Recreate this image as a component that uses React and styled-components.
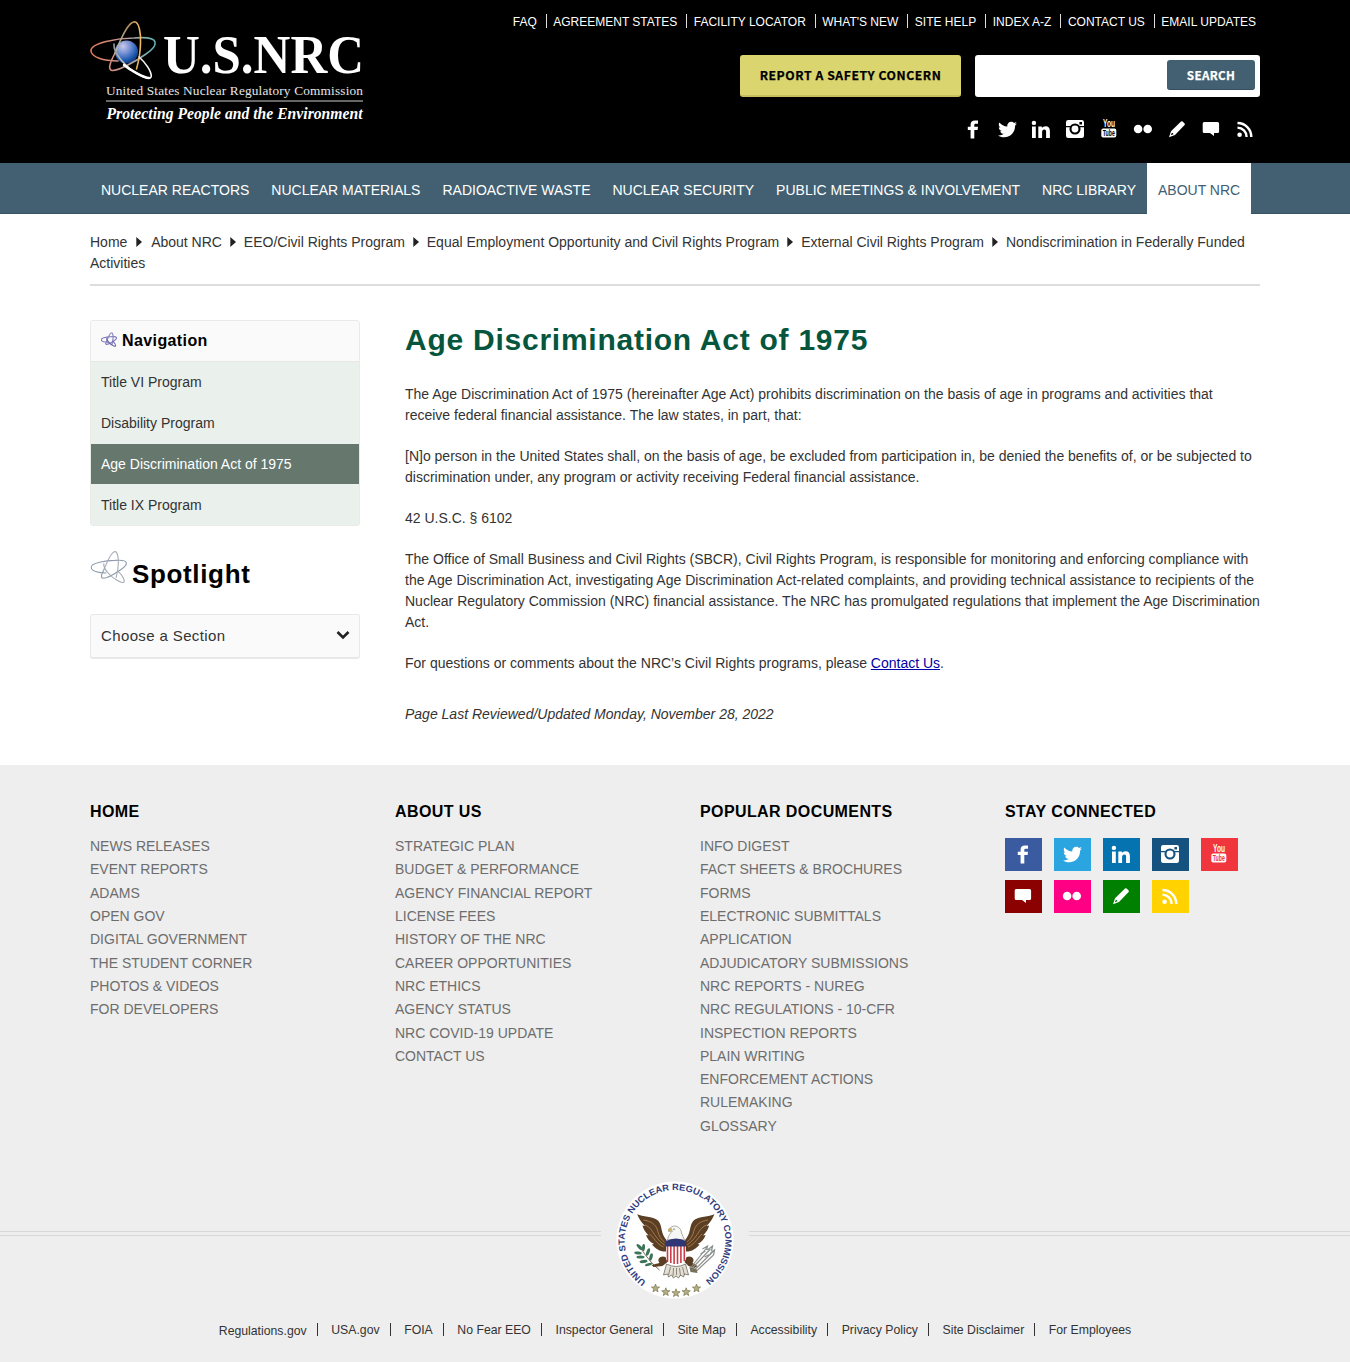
import React from "react";
import styled, { createGlobalStyle } from "styled-components";
import { FaTwitter } from "react-icons/fa";

const Global = createGlobalStyle`
  *, *::before, *::after { box-sizing: border-box; }
  body { margin: 0; background: #fff; color: #333; font: 14px/21px "Liberation Sans", Arial, sans-serif; }
  ul { list-style: none; margin: 0; padding: 0; }
  a { color: inherit; text-decoration: none; }
`;

const Container = styled.div`
  width: 1170px;
  margin: 0 auto;
`;

/* ---------- header ---------- */
const Header = styled.header`
  height: 163px;
  background: #000;
`;
const HeaderRow = styled(Container)`
  display: flex;
  justify-content: space-between;
`;
const LogoLink = styled.a`
  display: block;
  padding-top: 19px;
  svg { display: block; overflow: visible; }
`;
const HeaderSide = styled.div`
  display: flex;
  flex-direction: column;
  align-items: flex-end;
`;
const TopLinks = styled.ul`
  display: flex;
  align-items: center;
  height: 26px;
  margin: 9px 4px 0 0;
  color: #fff;
  font-size: 12px;
`;
const TopLink = styled.li`
  display: flex;
  align-items: center;
  & + &::before {
    content: "";
    width: 1px;
    height: 14px;
    margin: -3px 6.5px 0 9px;
    background: #ddd;
  }
`;
const Tools = styled.div`
  display: flex;
  gap: 14px;
  margin-top: 20px;
`;
const Report = styled.a`
  width: 221px;
  height: 42px;
  border-radius: 3px;
  border-bottom: 2px solid #c5c05d;
  background: #dad56f;
  color: #000;
  font: 700 12.2px/41px "Noto Sans CJK JP", sans-serif;
  letter-spacing: 0.57px;
  -webkit-text-stroke: 0.25px currentColor;
  text-align: center;
  white-space: nowrap;
`;
const Search = styled.form`
  display: flex;
  width: 285px;
  height: 42px;
  padding: 5px;
  border-radius: 3px;
  background: #fff;
`;
const SearchInput = styled.input`
  flex: 1;
  min-width: 0;
  border: 0;
  outline: 0;
  background: transparent;
`;
const SearchButton = styled.button`
  width: 88px;
  height: 30px;
  padding: 0;
  border: 0;
  border-bottom: 1px solid #365062;
  border-radius: 3px;
  background: #426072;
  color: #fff;
  font: 700 11.7px/27px "Noto Sans CJK JP", sans-serif;
  letter-spacing: 0.3px;
  -webkit-text-stroke: 0.25px currentColor;
`;
const HeaderSocial = styled.div`
  display: flex;
  margin: 20px -2px 0 0;
  color: #fff;
`;
const SocialCell = styled.a`
  display: flex;
  width: 34px;
  height: 24px;
  align-items: center;
  justify-content: center;
  svg { overflow: visible; }
`;

/* ---------- main nav ---------- */
const NavBar = styled.nav`
  height: 51px;
  background: #426072;
  border-bottom: 1px solid #385364;
`;
const NavList = styled(Container)`
  display: flex;
`;
const NavItem = styled.a`
  height: 51px;
  padding: 0 11px;
  line-height: 54px;
  white-space: nowrap;
  color: ${(p) => (p.$active ? "#426072" : "#fff")};
  background: ${(p) => (p.$active ? "#fff" : "transparent")};
`;

/* ---------- breadcrumb ---------- */
const Breadcrumb = styled(Container)`
  height: 72px;
  padding-top: 18px;
  border-bottom: 2px solid #ddd;
`;
const Arrow = styled.svg`
  width: 6px;
  height: 10px;
  margin: 0 ${(p) => (p.$wide ? 9.2 : 7.9)}px 0 ${(p) => (p.$wide ? 8.6 : 8)}px;
  vertical-align: 0;
  fill: #222;
`;

/* ---------- content ---------- */
const Main = styled(Container)`
  display: flex;
  gap: 45px;
  height: 479px;
  padding-top: 34px;
`;
const Sidebar = styled.aside`
  width: 270px;
  flex: none;
`;
const SideNav = styled.div`
  height: 206px;
  border: 1px solid #e9ebe9;
  border-radius: 3px;
  background: #eaf0eb;
  overflow: hidden;
`;
const SideTitle = styled.h2`
  display: flex;
  align-items: center;
  height: 41px;
  margin: 0;
  padding: 0 10px 1px;
  gap: 5px;
  border-bottom: 1px solid #e7e7e7;
  background: #fafafa;
  color: #000;
  font-size: 16px;
  letter-spacing: 0.4px;
  svg { margin-top: -3px; }
`;
const SideItem = styled.a`
  display: block;
  height: 40px;
  margin-bottom: 1px;
  padding-left: 10px;
  line-height: 40px;
  color: ${(p) => (p.$active ? "#fff" : "#333")};
  background: ${(p) => (p.$active ? "#66786e" : "#eaf0eb")};
`;
const SpotlightTitle = styled.h2`
  display: flex;
  align-items: flex-end;
  gap: 4px;
  height: 40px;
  margin: 24px 0 0;
  color: #000;
  font-size: 26px;
  line-height: 31px;
  letter-spacing: 0.65px;
  svg { align-self: flex-start; }
`;
const SectionSelect = styled.div`
  display: flex;
  align-items: center;
  justify-content: space-between;
  height: 45px;
  margin-top: 24px;
  padding: 0 9px 2px 10px;
  border: 1px solid #e8e8e8;
  border-bottom-width: 2px;
  border-radius: 3px;
  background: #fafafa;
  font-size: 15px;
  letter-spacing: 0.375px;
`;
const Article = styled.article`
  width: 855px;
`;
const Title = styled.h1`
  margin: 0 0 25px;
  color: #05563c;
  font-size: 30px;
  line-height: 39px;
  letter-spacing: 0.75px;
`;
const Para = styled.p`
  margin: 0 0 20px;
`;
const ContactLink = styled.a`
  color: #0000a8;
  text-decoration: underline;
`;
const Updated = styled.p`
  margin: 30px 0 0;
  font-style: italic;
`;

/* ---------- footer ---------- */
const Footer = styled.footer`
  height: 597px;
  background: #eee;
`;
const FooterCols = styled(Container)`
  display: flex;
  height: 414px;
  padding-top: 36px;
`;
const FooterCol = styled.section`
  width: 305px;
  flex: none;
  &:last-child { width: 255px; }
`;
const FooterHeading = styled.h3`
  margin: 0 0 13px;
  color: #000;
  font-size: 16px;
  line-height: 21px;
  letter-spacing: 0.4px;
`;
const FooterLink = styled.li`
  color: #6d6d6d;
  line-height: 23.31px;
`;
const Tiles = styled.div`
  display: flex;
  flex-wrap: wrap;
  gap: 9px 12px;
  margin-top: 16px;
  color: #fff;
`;
const Tile = styled.a`
  display: flex;
  width: 37px;
  height: 33px;
  padding: 0 1px 1px 0;
  align-items: center;
  justify-content: center;
  background: ${(p) => p.$bg};
  svg { overflow: visible; }
`;
const SealRow = styled.div`
  display: flex;
  align-items: center;
  height: 122px;
`;
const Rule = styled.div`
  flex: 1;
  height: 5px;
  margin-top: -13px;
  border: solid #d8d8d8;
  border-width: 1px 0;
`;
const SealBox = styled.div`
  width: 148px;
  text-align: center;
  svg { display: block; margin: 0 auto; overflow: visible; }
`;
const BottomLinks = styled.ul`
  display: flex;
  justify-content: center;
  margin-top: 19px;
  font-size: 12.25px;
`;
const BottomLink = styled.li`
  display: flex;
  align-items: center;
  height: 21px;
  & + &::before {
    content: "";
    width: 1px;
    height: 13px;
    margin: -3px 13.5px 0 10.1px;
    background: #333;
  }
`;
const Lowered = styled.span`
  padding-top: 2px;
`;

/* ---------- drawings ---------- */
const Orbits = ({ width, height, colors, stroke = 1.5, globe }) => (
  <svg width={width} height={height} viewBox="0 -1 67 62" fill="none" strokeWidth={stroke} strokeLinecap="round">
    {globe && (
      <defs>
        <radialGradient id="globe" cx=".35" cy=".25" r=".8">
          <stop offset="0" stopColor="#c9c9ea" />
          <stop offset=".4" stopColor="#7590d2" />
          <stop offset=".75" stopColor="#1f5cb4" />
          <stop offset="1" stopColor="#0c2f70" />
        </radialGradient>
        <linearGradient id="orbA"><stop offset="0" stopColor="#e5785a" /><stop offset=".5" stopColor="#c79a95" /><stop offset="1" stopColor="#5fb4b8" /></linearGradient>
        <linearGradient id="orbB"><stop offset="0" stopColor="#a9bfb4" /><stop offset=".5" stopColor="#b08a58" /><stop offset="1" stopColor="#f2b968" /></linearGradient>
        <linearGradient id="orbC"><stop offset="0" stopColor="#999" /><stop offset=".4" stopColor="#ddd" /><stop offset="1" stopColor="#fff" /></linearGradient>
      </defs>
    )}
    {globe && <circle cx="36.5" cy="32" r="11.5" fill="url(#globe)" />}
    <path d="M28 41C13 41 1.5 37 1 31C0 23 28 18 44 18C56 17 64 18 65 22C66 26 62 30 56 34C46 41 29 51 22 50.5C17 49 21 41 25 33" stroke={colors[0]} />
    <path d="M25 33C29 24 37 2 44.5 1.8C49 2 51 13 50.5 23C50.4 32 48.5 42 46.5 49" stroke={colors[1]} />
    <path d="M24 24C23 34 37 48 48 54C56 58.5 61 60 61.3 56C61 51 56 43 49 37" stroke={colors[2]} />
    {globe && <path d="M34 45C40 50 54 58 59 58" stroke="#fff" strokeWidth="2.4" />}
  </svg>
);

const logoSerif = "'Liberation Serif', 'Times New Roman', serif";
const Logo = () => (
  <svg width="275" height="106" viewBox="0 0 275 106" fill="#fff" fontFamily={logoSerif}>
    <Orbits width={67} height={62} stroke={1.6} globe colors={["url(#orbA)", "url(#orbB)", "url(#orbC)"]} />
    <text x="73" y="54" fontSize="55" fontWeight="700" textLength="201" lengthAdjust="spacingAndGlyphs">U.S.NRC</text>
    <text x="16" y="75.5" fontSize="13.3" fill="#e6e6e6" textLength="257" lengthAdjust="spacing">United States Nuclear Regulatory Commission</text>
    <rect x="16" y="81.5" width="257" height="1" fill="#ccc" />
    <text x="16.5" y="99.5" fontSize="17" fontWeight="700" fontStyle="italic" textLength="256" lengthAdjust="spacingAndGlyphs">Protecting People and the Environment</text>
  </svg>
);

const Facebook = () => (
  <svg width="12" height="19" viewBox="0 0 12 19" fill="currentColor">
    <path d="M3.6 18.5V9.9H.8V6.7H3.6V4.6C3.6 1.8 5.2.5 7.9.5H11V3.8H8.9C7.7 3.8 7.3 4.3 7.3 5.2V6.7H11L10.6 9.9H7.3V18.5Z" />
  </svg>
);
const Twitter = () => <FaTwitter size={19} />;
const LinkedIn = () => (
  <svg width="19" height="19" viewBox=".7 0 19 19" fill="currentColor">
    <circle cx="2.6" cy="2.9" r="2.2" />
    <path d="M.7 6.5H4.5V18H.7ZM7 6.5H10.6V8.1C11.4 6.9 12.6 6.2 14.3 6.2C17.2 6.2 18.6 8 18.6 11.2V18H14.8V11.8C14.8 10.2 14.2 9.4 13 9.4C11.6 9.4 10.8 10.4 10.8 12V18H7Z" />
  </svg>
);
const Instagram = ({ hole }) => (
  <svg width="18" height="18" viewBox="0 0 18 18" fill="currentColor">
    <path fillRule="evenodd" d="M2.2 0H15.8A2.2 2.2 0 0 1 18 2.2V15.8A2.2 2.2 0 0 1 15.8 18H2.2A2.2 2.2 0 0 1 0 15.8V2.2A2.2 2.2 0 0 1 2.2 0ZM13.4 2V4.6H16V2Z" />
    <path d="M0 6.7H4.5M13.5 6.7H18" stroke={hole} strokeWidth="1.3" />
    <circle cx="9" cy="9" r="4.5" fill="currentColor" stroke={hole} strokeWidth="2.1" />
  </svg>
);
const YouTube = ({ hole }) => (
  <svg width="18" height="20" viewBox="0 0 18 20" fill="currentColor" opacity=".99" fontFamily="'Liberation Sans', Arial, sans-serif" fontWeight="700">
    <text x="3" y="8.3" fontSize="10.8" textLength="12" lengthAdjust="spacingAndGlyphs">You</text>
    <rect x="1.3" y="9.6" width="15" height="9" rx="1.8" />
    <text x="2.8" y="17.2" fontSize="8.4" fill={hole} textLength="12" lengthAdjust="spacingAndGlyphs">Tube</text>
  </svg>
);
const Flickr = () => (
  <svg width="20" height="18" viewBox="0 0 20 18" fill="currentColor">
    <circle cx="5.1" cy="9" r="4.3" /><circle cx="14.7" cy="9" r="4.3" />
  </svg>
);
const Pencil = () => (
  <svg width="18" height="18" viewBox="0 0 18 18" fill="currentColor">
    <path fillRule="evenodd" d="M13 1.5Q13.8.8 14.6 1.5L16.6 3.5Q17.3 4.3 16.6 5.1L7 15L1 17.2L3 11.3ZM3.9 12.8L2.8 15.3L5.4 14.3Q5.4 13 3.9 12.8Z" />
  </svg>
);
const Bubble = () => (
  <svg width="18" height="18" viewBox="0 0 18 18" fill="currentColor">
    <path d="M2.2 2H15.6Q17.1 2 17.1 3.5V11.6Q17.1 13.1 15.6 13.1H12V16L8 13.1H2.2Q.7 13.1 .7 11.6V3.5Q.7 2 2.2 2Z" />
  </svg>
);
const Rss = () => (
  <svg width="18" height="18" viewBox="0 0 18 18" fill="none" stroke="currentColor" strokeWidth="2.4">
    <circle cx="3.6" cy="14.7" r="2.3" fill="currentColor" stroke="none" />
    <path d="M1.5 7.6A9.3 9.3 0 0 1 10.6 16.9M1.5 3A13.8 13.8 0 0 1 15.3 16.9" />
  </svg>
);

const Star = ({ x, y }) => (
  <path transform={`translate(${x} ${y}) scale(1.05)`} d="M0-4L1-1.2L3.9-1.2L1.6.6L2.4 3.4L0 1.8L-2.4 3.4L-1.6.6L-3.9-1.2L-1-1.2Z" fill="#b5b184" stroke="#7b7850" strokeWidth=".7" />
);
const Wing = () => (
  <g>
    <path d="M22.7 34.3C28 37 38 36 43.5 40.5C48 45 46 54 52 60V71.5C46 72 41 69 37.5 64.5L39.5 64C35 62 32.5 58 31.5 55L34 55.5C30.5 52 28.5 48 28 45.5L30.5 46C26.5 42 24 38 22.7 34.3Z" fill="#5b3f25" />
    <path d="M29 40C36 41 41 44 43 50C44 54 45 58 50 62M30.5 45C36 47 38 52 41 56C44 60 47 63 50 65M35 54C39 57 42 64 49 67" stroke="#a67a48" strokeWidth="1" fill="none" />
  </g>
);
const Seal = () => (
  <svg width="120" height="120" viewBox=".5 0 120 120">
    <circle cx="60.5" cy="60" r="58.5" fill="#fff" />
    <path id="sealArc" d="M31.5 101.5A50.3 50.3 0 1 1 89.5 101.5" fill="none" />
    <text fontFamily="'Liberation Sans', Arial, sans-serif" fontWeight="700" fontSize="9" fill="#2f3d80">
      <textPath href="#sealArc" textLength="252" lengthAdjust="spacingAndGlyphs">UNITED STATES NUCLEAR REGULATORY COMMISSION</textPath>
    </text>
    <Wing />
    <g transform="matrix(-1 0 0 1 122.6 0)"><Wing /></g>
    <path d="M51 77C46 75 42 79 45 83L37 85L39 87L48 86L53 82ZM72 77C77 75 81 79 78 83L83 86L80 88L74 86L70 82Z" fill="#5b3f25" />
    <path d="M52 84Q62 89 71 84L74 95L70 94L69 97L66 95L64 98L61.5 96L59 98L57 95L54 97L53 94L49 95Z" fill="#e4e0d6" stroke="#5d594c" strokeWidth=".7" />
    <path d="M56 87L54 95M59 88L58.5 96M62 88V95M65 88L66 96M68 87L70 95" stroke="#666255" strokeWidth=".7" />
    <path d="M53 60C54 55 56 53 58 51L54 51.5Q53 48.5 57 47C61 44 67 48 67 53L70 60Z" fill="#f6f6f4" stroke="#8b887d" strokeWidth=".7" />
    <path d="M54 51.5Q53 48.5 57 48L58 50.5Z" fill="#ceb257" />
    <circle cx="59.5" cy="49.2" r=".6" fill="#333" />
    <path d="M51.5 63H71.5V78Q71 83 61.5 85Q52 83 51.5 78Z" fill="#fff" />
    <path d="M53 64V82M56.3 64V83M59.6 64V84M63 64V84M66.4 64V83M69.8 64V81" stroke="#c93c49" strokeWidth="1.6" />
    <path d="M51.5 61Q56 58.5 61.5 58.5Q67 58.5 71.5 61V66.5H51.5Z" fill="#303675" />
    <path d="M45 90Q36 83 26 68" stroke="#554b32" strokeWidth=".8" fill="none" />
    <g fill="#3c7459">
      <ellipse cx="25" cy="67" rx="3.8" ry="1.6" transform="rotate(45 25 67)" />
      <ellipse cx="29" cy="67.5" rx="3.5" ry="1.5" transform="rotate(95 29 67.5)" />
      <ellipse cx="23.5" cy="73" rx="3.8" ry="1.5" transform="rotate(8 23.5 73)" />
      <ellipse cx="33.5" cy="72" rx="4" ry="1.6" transform="rotate(110 33.5 72)" />
      <ellipse cx="26" cy="77" rx="4" ry="1.5" />
      <ellipse cx="36.5" cy="77" rx="3.8" ry="1.6" transform="rotate(105 36.5 77)" />
      <ellipse cx="29" cy="81.5" rx="4" ry="1.5" transform="rotate(-8 29 81.5)" />
      <ellipse cx="34" cy="84.5" rx="3.6" ry="1.4" transform="rotate(-15 34 84.5)" />
    </g>
    <path d="M76 90L96 69M79 91L98 72M81 92L99 75M76 88L92 68" stroke="#8b8e8a" strokeWidth="1.1" />
    <path d="M75 87L82 89L83 93L76 92Z" fill="#77705c" />
    <path d="M88 69L93 66L92 70M93 70L98 66L97 71M96 73L100 70L99 75M86 74L91 71M90 77L96 74" stroke="#87928f" strokeWidth="1.3" fill="none" />
    <Star x={41} y={108.3} /><Star x={51.3} y={112} /><Star x={61.5} y={113} /><Star x={71.7} y={112} /><Star x={82} y={108.3} />
  </svg>
);

/* ---------- data ---------- */
const topLinks = ["FAQ", "AGREEMENT STATES", "FACILITY LOCATOR", "WHAT'S NEW", "SITE HELP", "INDEX A-Z", "CONTACT US", "EMAIL UPDATES"];
const navItems = ["NUCLEAR REACTORS", "NUCLEAR MATERIALS", "RADIOACTIVE WASTE", "NUCLEAR SECURITY", "PUBLIC MEETINGS & INVOLVEMENT", "NRC LIBRARY", "ABOUT NRC"];
const crumbs = ["Home", "About NRC", "EEO/Civil Rights Program", "Equal Employment Opportunity and Civil Rights Program", "External Civil Rights Program", "Nondiscrimination in Federally Funded Activities"];
const sideItems = ["Title VI Program", "Disability Program", "Age Discrimination Act of 1975", "Title IX Program"];
const headerIcons = [Facebook, Twitter, LinkedIn, Instagram, YouTube, Flickr, Pencil, Bubble, Rss];
const columns = [
  ["HOME", ["NEWS RELEASES", "EVENT REPORTS", "ADAMS", "OPEN GOV", "DIGITAL GOVERNMENT", "THE STUDENT CORNER", "PHOTOS & VIDEOS", "FOR DEVELOPERS"]],
  ["ABOUT US", ["STRATEGIC PLAN", "BUDGET & PERFORMANCE", "AGENCY FINANCIAL REPORT", "LICENSE FEES", "HISTORY OF THE NRC", "CAREER OPPORTUNITIES", "NRC ETHICS", "AGENCY STATUS", "NRC COVID-19 UPDATE", "CONTACT US"]],
  ["POPULAR DOCUMENTS", ["INFO DIGEST", "FACT SHEETS & BROCHURES", "FORMS", "ELECTRONIC SUBMITTALS", "APPLICATION", "ADJUDICATORY SUBMISSIONS", "NRC REPORTS - NUREG", "NRC REGULATIONS - 10-CFR", "INSPECTION REPORTS", "PLAIN WRITING", "ENFORCEMENT ACTIONS", "RULEMAKING", "GLOSSARY"]],
];
const tiles = [
  [Facebook, "#3b5ba0"], [Twitter, "#2ba5df"], [LinkedIn, "#0673b1"], [Instagram, "#16527f"], [YouTube, "#f0353d"],
  [Bubble, "#8b0000"], [Flickr, "#ff0084"], [Pencil, "#008000"], [Rss, "#ffd200"],
];
const bottomLinks = ["Regulations.gov", "USA.gov", "FOIA", "No Fear EEO", "Inspector General", "Site Map", "Accessibility", "Privacy Policy", "Site Disclaimer", "For Employees"];

export default function App() {
  return (
    <>
      <Global />
      <Header>
        <HeaderRow>
          <LogoLink><Logo /></LogoLink>
          <HeaderSide>
            <TopLinks>{topLinks.map((t) => <TopLink key={t}><a>{t}</a></TopLink>)}</TopLinks>
            <Tools>
              <Report>REPORT A SAFETY CONCERN</Report>
              <Search>
                <SearchInput aria-label="Search" />
                <SearchButton type="button">SEARCH</SearchButton>
              </Search>
            </Tools>
            <HeaderSocial>
              {headerIcons.map((Icon, i) => <SocialCell key={i}><Icon hole="#000" /></SocialCell>)}
            </HeaderSocial>
          </HeaderSide>
        </HeaderRow>
      </Header>
      <NavBar>
        <NavList>
          {navItems.map((t) => <NavItem key={t} $active={t === "ABOUT NRC"}>{t}</NavItem>)}
        </NavList>
      </NavBar>
      <Breadcrumb>
        {crumbs.map((t, i) => (
          <React.Fragment key={t}>
            {i > 0 && <Arrow $wide={i === 1} viewBox="0 0 6 10"><path d="M0.3 0L6 5L0.3 10Z" /></Arrow>}
            <a>{t}</a>
          </React.Fragment>
        ))}
      </Breadcrumb>
      <Main>
        <Sidebar>
          <SideNav>
            <SideTitle>
              <Orbits width={16} height={15} stroke={5} colors={["#8078b8", "#8d88c4", "#6f68ae"]} />
              Navigation
            </SideTitle>
            {sideItems.map((t, i) => <SideItem key={t} $active={i === 2}>{t}</SideItem>)}
          </SideNav>
          <SpotlightTitle>
            <Orbits width={38} height={34} stroke={2} colors={["#8f9cad", "#a6adb8", "#9ea8b5"]} />
            Spotlight
          </SpotlightTitle>
          <SectionSelect>
            Choose a Section
            <svg width="14" height="10" viewBox="0 0 14 10" fill="none" stroke="#222" strokeWidth="2.6"><path d="M1.5 2L7 7.5L12.5 2" /></svg>
          </SectionSelect>
        </Sidebar>
        <Article>
          <Title>Age Discrimination Act of 1975</Title>
          <Para>The Age Discrimination Act of 1975 (hereinafter Age Act) prohibits discrimination on the basis of age in programs and activities that receive federal financial assistance. The law states, in part, that:</Para>
          <Para>[N]o person in the United States shall, on the basis of age, be excluded from participation in, be denied the benefits of, or be subjected to discrimination under, any program or activity receiving Federal financial assistance.</Para>
          <Para>42 U.S.C. § 6102</Para>
          <Para>The Office of Small Business and Civil Rights (SBCR), Civil Rights Program, is responsible for monitoring and enforcing compliance with the Age Discrimination Act, investigating Age Discrimination Act-related complaints, and providing technical assistance to recipients of the Nuclear Regulatory Commission (NRC) financial assistance. The NRC has promulgated regulations that implement the Age Discrimination Act.</Para>
          <Para>For questions or comments about the NRC’s Civil Rights programs, please <ContactLink>Contact Us</ContactLink>.</Para>
          <Updated>Page Last Reviewed/Updated Monday, November 28, 2022</Updated>
        </Article>
      </Main>
      <Footer>
        <FooterCols>
          {columns.map(([h, links]) => (
            <FooterCol key={h}>
              <FooterHeading>{h}</FooterHeading>
              <ul>{links.map((l) => <FooterLink key={l}><a>{l}</a></FooterLink>)}</ul>
            </FooterCol>
          ))}
          <FooterCol>
            <FooterHeading>STAY CONNECTED</FooterHeading>
            <Tiles>{tiles.map(([Icon, bg]) => <Tile key={bg} $bg={bg}><Icon hole={bg} /></Tile>)}</Tiles>
          </FooterCol>
        </FooterCols>
        <SealRow>
          <Rule />
          <SealBox><Seal /></SealBox>
          <Rule />
        </SealRow>
        <BottomLinks>
          {bottomLinks.map((t, i) => <BottomLink key={t}>{i === 0 ? <Lowered>{t}</Lowered> : <a>{t}</a>}</BottomLink>)}
        </BottomLinks>
      </Footer>
    </>
  );
}
